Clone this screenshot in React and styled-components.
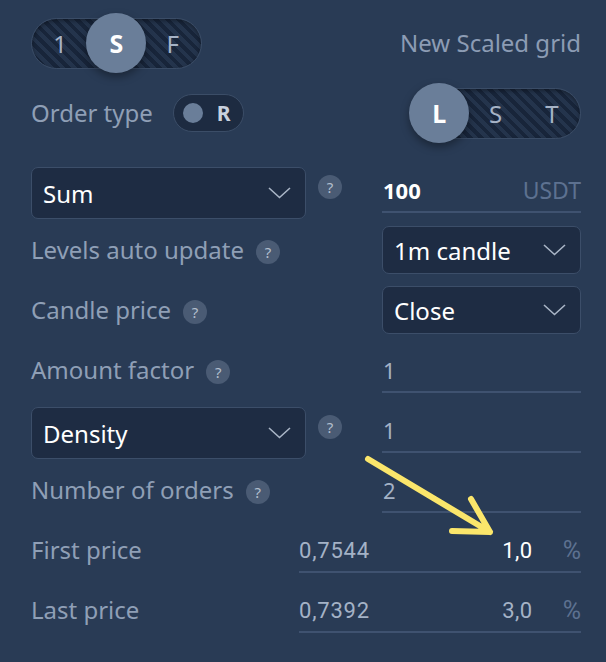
import React from "react";
import styled, { createGlobalStyle } from "styled-components";

const Global = createGlobalStyle`
  html, body {
    margin: 0;
    padding: 0;
    background: #293b55;
  }
  body {
    font-family: "Noto Sans", "Open Sans", sans-serif;
  }
`;

export default function App() {
  return (
    <Panel>
      <Global />
      <Row>
        <Left>
          <Toggle items={["1", "S", "F"]} active={1} />
        </Left>
        <Title>New Scaled grid</Title>
      </Row>

      <Row $gap={10}>
        <Left>
          <Label>Order type</Label>
          <MiniSwitch>
            <Dot />
            <MiniText>R</MiniText>
          </MiniSwitch>
        </Left>
        <Right>
          <Toggle items={["L", "S", "T"]} active={0} />
        </Right>
      </Row>

      <Row $gap={17}>
        <Left $gap={12} $drop>
          <Select $w={275} $h={52}>
            Sum
            <Chevron />
          </Select>
          <Help $up>?</Help>
        </Left>
        <Field>
          <Value $strong>100</Value>
          <Unit>USDT</Unit>
        </Field>
      </Row>

      <Row>
        <Left>
          <Label>Levels auto update</Label>
          <Help>?</Help>
        </Left>
        <Select $w={199} $h={48}>
          1m candle
          <Chevron />
        </Select>
      </Row>

      <Row>
        <Left>
          <Label>Candle price</Label>
          <Help>?</Help>
        </Left>
        <Select $w={199} $h={48}>
          Close
          <Chevron />
        </Select>
      </Row>

      <Row>
        <Left>
          <Label>Amount factor</Label>
          <Help>?</Help>
        </Left>
        <Field>
          <Value>1</Value>
        </Field>
      </Row>

      <Row>
        <Left $gap={12} $drop>
          <Select $w={275} $h={52}>
            Density
            <Chevron />
          </Select>
          <Help $up>?</Help>
        </Left>
        <Field>
          <Value>1</Value>
        </Field>
      </Row>

      <Row>
        <Left>
          <Label>Number of orders</Label>
          <Help>?</Help>
        </Left>
        <Field>
          <Value>2</Value>
        </Field>
      </Row>

      <PriceRow>
        <Label>First price</Label>
        <Field>
          <Price>0,7544</Price>
          <Percent $strong>1,0</Percent>
          <PercentUnit>%</PercentUnit>
        </Field>
      </PriceRow>

      <PriceRow>
        <Label>Last price</Label>
        <Field>
          <Price>0,7392</Price>
          <Percent>3,0</Percent>
          <PercentUnit>%</PercentUnit>
        </Field>
      </PriceRow>

      <Arrow viewBox="0 0 606 662">
        <path
          d="M368 459 L490 532 M452 531 L490 532 L471 499"
          fill="none"
          stroke="#fbe66b"
          strokeWidth="6"
          strokeLinecap="round"
          strokeLinejoin="round"
        />
      </Arrow>
    </Panel>
  );
}

function Toggle({ items, active }) {
  return (
    <Track>
      {items.map((t, i) => (
        <Seg key={t}>
          {i === active ? <Knob>{t}</Knob> : t}
        </Seg>
      ))}
    </Track>
  );
}

function Chevron() {
  return (
    <svg width="23" height="12" viewBox="0 0 23 12">
      <polyline
        points="1,1 11.5,10.5 22,1"
        fill="none"
        stroke="#a9b5c6"
        strokeWidth="1.6"
      />
    </svg>
  );
}

const Panel = styled.div`
  position: relative;
  width: 606px;
  height: 662px;
  box-sizing: border-box;
  padding: 13px 25px 0 31px;
  background: #293b55;
  overflow: hidden;
`;

const Row = styled.div`
  display: grid;
  grid-template-columns: 1fr 199px;
  align-items: center;
  height: 60px;
  margin-top: ${p => p.$gap || 0}px;
`;

const PriceRow = styled(Row)`
  grid-template-columns: 1fr 282px;
`;

const Left = styled.div`
  display: flex;
  align-items: center;
  gap: ${p => p.$gap || 12}px;
  padding-top: ${p => (p.$drop ? 6 : 0)}px;
`;

const Right = styled.div`
  display: flex;
  justify-content: flex-end;
`;

const Title = styled.div`
  justify-self: end;
  font-size: 24px;
  color: #8c9cb4;
  white-space: nowrap;
  margin-top: -2px;
`;

const Label = styled.div`
  font-size: 24px;
  color: #8f9fb6;
  white-space: nowrap;
  margin-top: -1px;
`;

const Help = styled.div`
  width: 24px;
  height: 24px;
  border-radius: 50%;
  background: #4a5b74;
  color: #b3bfce;
  font-size: 15px;
  display: flex;
  align-items: center;
  justify-content: center;
  margin-top: ${p => (p.$up ? "-12px" : "3px")};
`;

const Track = styled.div`
  display: flex;
  width: 171px;
  height: 51px;
  box-sizing: border-box;
  border-radius: 26px;
  border: 1.5px solid #3a4c66;
  background: repeating-linear-gradient(
    45deg,
    #18253a 0 4px,
    #24344c 4px 8px
  );
  box-shadow: inset 0 2px 4px rgba(0, 0, 0, 0.35);
`;

const Seg = styled.div`
  position: relative;
  flex: 1;
  display: flex;
  align-items: center;
  justify-content: center;
  font-size: 24px;
  color: #a6b3c6;
`;

const Knob = styled.div`
  position: absolute;
  left: 50%;
  top: 50%;
  width: 60px;
  height: 60px;
  margin: -30px 0 0 -30px;
  border-radius: 50%;
  background: #6a7e99;
  box-shadow: 0 4px 8px rgba(0, 0, 0, 0.35);
  display: flex;
  align-items: center;
  justify-content: center;
  color: #ffffff;
  font-size: 25px;
  font-weight: 700;
`;

const MiniSwitch = styled.div`
  display: flex;
  align-items: center;
  gap: 14px;
  width: 71px;
  height: 38px;
  box-sizing: border-box;
  padding-left: 9px;
  border-radius: 19px;
  border: 1.5px solid #3b4d67;
  background: #1d2b41;
  margin-left: 8px;
`;

const Dot = styled.div`
  width: 20px;
  height: 20px;
  border-radius: 50%;
  background: #6a7e99;
`;

const MiniText = styled.div`
  font-size: 21px;
  font-weight: 700;
  color: #c8d1de;
`;

const Select = styled.div`
  display: flex;
  align-items: center;
  justify-content: space-between;
  width: ${p => p.$w}px;
  height: ${p => p.$h}px;
  box-sizing: border-box;
  padding: 0 14px 0 11px;
  border: 1.5px solid #3c4e69;
  border-radius: 7px;
  background: #1e2c43;
  color: #ffffff;
  font-size: 24px;
`;

const Field = styled.div`
  display: flex;
  align-items: center;
  height: 46px;
  box-sizing: border-box;
  border-bottom: 2px solid #3f5270;
  padding-top: 2px;
`;

const Value = styled.div`
  flex: 1;
  padding-left: 1px;
  font-size: 22px;
  font-weight: ${p => (p.$strong ? 700 : 400)};
  color: ${p => (p.$strong ? "#ffffff" : "#a4b2c6")};
`;

const Unit = styled.div`
  font-size: 23px;
  color: #5d7190;
`;

const Price = styled.div`
  flex: 1;
  font-family: Roboto, sans-serif;
  font-size: 22px;
  letter-spacing: 0.8px;
  color: #a4b2c6;
`;

const Percent = styled.div`
  font-family: Roboto, sans-serif;
  font-size: 22px;
  letter-spacing: 0.5px;
  color: ${p => (p.$strong ? "#ffffff" : "#a4b2c6")};
`;

const PercentUnit = styled.div`
  margin-left: 30px;
  font-family: Roboto, sans-serif;
  font-size: 25px;
  color: #5d7190;
`;

const Arrow = styled.svg`
  position: absolute;
  left: 0;
  top: 0;
  width: 606px;
  height: 662px;
  pointer-events: none;
`;
